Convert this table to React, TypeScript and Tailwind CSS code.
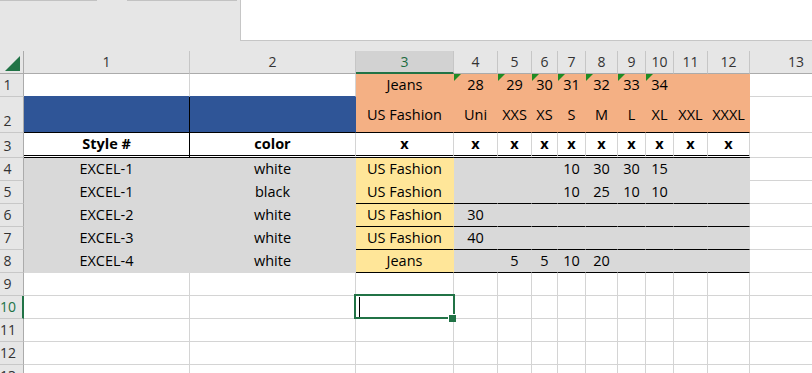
import React from "react";

const W = [
  "w-[166px]",
  "w-[166px]",
  "w-[98px]",
  "w-[44px]",
  "w-[34px]",
  "w-[26px]",
  "w-[28px]",
  "w-[32px]",
  "w-[28px]",
  "w-[28px]",
  "w-[34px]",
  "w-[42px]",
];

const WHITE = "bg-white border-r-[#d4d4d4] border-b-[#d4d4d4]";
const OR = "bg-[#f4b084] border-r-[#f4b084] border-b-[#f4b084]";
const OR_B = "bg-[#f4b084] border-r-[#f4b084] border-b-black";
const GR = "bg-[#d9d9d9] border-r-[#d9d9d9] border-b-[#d9d9d9]";
const GR_B = "bg-[#d9d9d9] border-r-[#d9d9d9] border-b-black";
const YE = "bg-[#ffe699] border-r-[#ffe699] border-b-[#ffe699]";
const YE_B = "bg-[#ffe699] border-r-[#ffe699] border-b-black";
const HDR3 = "bg-white border-r-[#d4d4d4] border-b-[3px] border-double border-b-black font-bold";

type CellDef = { t?: string; c: string; tri?: boolean };

function Tri() {
  return (
    <svg className="absolute left-0 top-0" width="7" height="7" viewBox="0 0 7 7">
      <polygon points="0,0 7,0 0,7" fill="#1f8b24" />
    </svg>
  );
}

function Cell({ w, def }: { w: string; def: CellDef }) {
  return (
    <div
      className={`${w} shrink-0 h-full relative flex items-center justify-center border-r border-b overflow-hidden whitespace-nowrap ${def.c}`}
    >
      {def.tri && <Tri />}
      {def.t !== undefined && <span className="leading-[18px]">{def.t}</span>}
    </div>
  );
}

function RowHead({ n, active }: { n: number; active?: boolean }) {
  return (
    <div
      className={`w-[24px] shrink-0 h-full flex items-end pb-[3px] bg-[#e6e6e6] border-b border-b-[#c8c8c8] ${
        active ? "border-r-2 border-r-[#217346] text-[#217346]" : "border-r border-r-[#ababab] text-[#333333]"
      }`}
    >
      <span className="w-[15px] text-center text-[14px] leading-[16px] font-['Open_Sans','Noto_Sans',sans-serif]">
        {n}
      </span>
    </div>
  );
}

function Row({
  n,
  h,
  cells,
  last,
  active,
}: {
  n: number;
  h: string;
  cells: CellDef[];
  last: CellDef;
  active?: boolean;
}) {
  return (
    <div className={`flex ${h} shrink-0`}>
      <RowHead n={n} active={active} />
      {cells.map((c, i) => (
        <Cell key={i} w={W[i]} def={c} />
      ))}
      <div className={`flex-1 h-full border-b ${last.c}`} />
    </div>
  );
}

function fill(c: string, n: number): CellDef[] {
  return Array.from({ length: n }, () => ({ c }));
}

export default function App() {
  const row1: CellDef[] = [
    { c: "bg-white border-r-[#d4d4d4] border-b-[#2f5597]" },
    { c: "bg-white border-r-[#d4d4d4] border-b-[#2f5597]" },
    { c: OR, t: "Jeans" },
    { c: OR, t: "28", tri: true },
    { c: OR, t: "29", tri: true },
    { c: OR, t: "30", tri: true },
    { c: OR, t: "31", tri: true },
    { c: OR, t: "32", tri: true },
    { c: OR, t: "33", tri: true },
    { c: OR, t: "34", tri: true },
    { c: OR },
    { c: OR },
  ];
  const row2: CellDef[] = [
    { c: "bg-[#2f5597] border-r-black border-b-black" },
    { c: "bg-[#2f5597] border-r-[#2f5597] border-b-black" },
    ...["US Fashion", "Uni", "XXS", "XS", "S", "M", "L", "XL", "XXL", "XXXL"].map((t) => ({ c: OR_B, t })),
  ];
  const row3: CellDef[] = [
    { c: "bg-white border-r-black border-b-[3px] border-double border-b-black font-bold", t: "Style #" },
    { c: HDR3, t: "color" },
    ...Array.from({ length: 10 }, () => ({ c: HDR3, t: "x" })),
  ];

  const dataRow = (
    style: string,
    color: string,
    type: string,
    vals: (string | undefined)[],
    black: boolean
  ): CellDef[] => [
    { c: GR, t: style },
    { c: GR, t: color },
    { c: black ? YE_B : YE, t: type },
    ...vals.map((v) => ({ c: black ? GR_B : GR, t: v })),
  ];

  const u = undefined;
  const row4 = dataRow("EXCEL-1", "white", "US Fashion", [u, u, u, "10", "30", "30", "15", u, u], false);
  const row5 = dataRow("EXCEL-1", "black", "US Fashion", [u, u, u, "10", "25", "10", "10", u, u], true);
  const row6 = dataRow("EXCEL-2", "white", "US Fashion", ["30", u, u, u, u, u, u, u, u], true);
  const row7 = dataRow("EXCEL-3", "white", "US Fashion", ["40", u, u, u, u, u, u, u, u], true);
  const row8 = dataRow("EXCEL-4", "white", "Jeans", [u, "5", "5", "10", "20", u, u, u, u], true);

  const white = fill(WHITE, 12);
  const wl: CellDef = { c: WHITE };

  const colHeads = ["1", "2", "3", "4", "5", "6", "7", "8", "9", "10", "11", "12"];

  return (
    <div className="w-[812px] h-[373px] overflow-hidden bg-[#e6e6e6] relative flex flex-col font-['Open_Sans','Noto_Sans',sans-serif] text-[14.5px] text-black">
      {/* top ribbon area */}
      <div className="h-[51px] shrink-0 flex items-start">
        <div className="w-[97px] h-px bg-[#c2c2c2]" />
        <div className="w-[30px]" />
        <div className="w-[110px] h-px bg-[#c2c2c2]" />
        <div className="w-[3px]" />
        <div className="flex-1 h-[41px] bg-white border-l border-b border-[#c6c6c6]" />
      </div>

      {/* column header row */}
      <div className="flex h-[23px] shrink-0">
        <div className="w-[24px] shrink-0 h-full flex items-end justify-end pr-[3px] pb-[2px] border-r border-r-[#ababab] border-b border-b-[#ababab]">
          <svg width="15" height="15" viewBox="0 0 15 15">
            <polygon points="15,0 15,15 0,15" fill="#217346" />
          </svg>
        </div>
        {colHeads.map((h, i) => (
          <div
            key={h}
            className={`${W[i]} shrink-0 h-full flex items-center justify-center border-r border-r-[#c6c6c6] text-[14px] leading-[16px] ${
              i === 2
                ? "bg-[#d2d2d2] border-b-2 border-b-[#217346] text-[#1d6b41]"
                : "border-b border-b-[#ababab] text-[#333333]"
            }`}
          >
            {h}
          </div>
        ))}
        <div className="flex-1 h-full flex items-center pl-[38px] border-b border-b-[#ababab] text-[14px] leading-[16px] text-[#333333]">
          13
        </div>
      </div>

      {/* grid */}
      <Row n={1} h="h-[23px]" cells={row1} last={wl} />
      <Row n={2} h="h-[36px]" cells={row2} last={wl} />
      <Row n={3} h="h-[25px]" cells={row3} last={wl} />
      <Row n={4} h="h-[23px]" cells={row4} last={wl} />
      <Row n={5} h="h-[23px]" cells={row5} last={wl} />
      <Row n={6} h="h-[23px]" cells={row6} last={wl} />
      <Row n={7} h="h-[23px]" cells={row7} last={wl} />
      <Row n={8} h="h-[23px]" cells={row8} last={wl} />
      <Row n={9} h="h-[23px]" cells={white} last={wl} />
      <Row n={10} h="h-[23px]" cells={white} last={wl} active />
      <Row n={11} h="h-[23px]" cells={white} last={wl} />
      <Row n={12} h="h-[23px]" cells={white} last={wl} />
      <Row n={13} h="h-[23px]" cells={white} last={wl} />

      {/* selection overlay */}
      <div className="absolute left-[354px] top-[294px] w-[101px] h-[25px] border-2 border-[#217346]" />
      <div className="absolute left-[448px] top-[314px] w-[8px] h-[8px] bg-[#217346] border-l border-t border-white" />
      <div className="absolute left-[359px] top-[297px] w-px h-[20px] bg-black" />
    </div>
  );
}
